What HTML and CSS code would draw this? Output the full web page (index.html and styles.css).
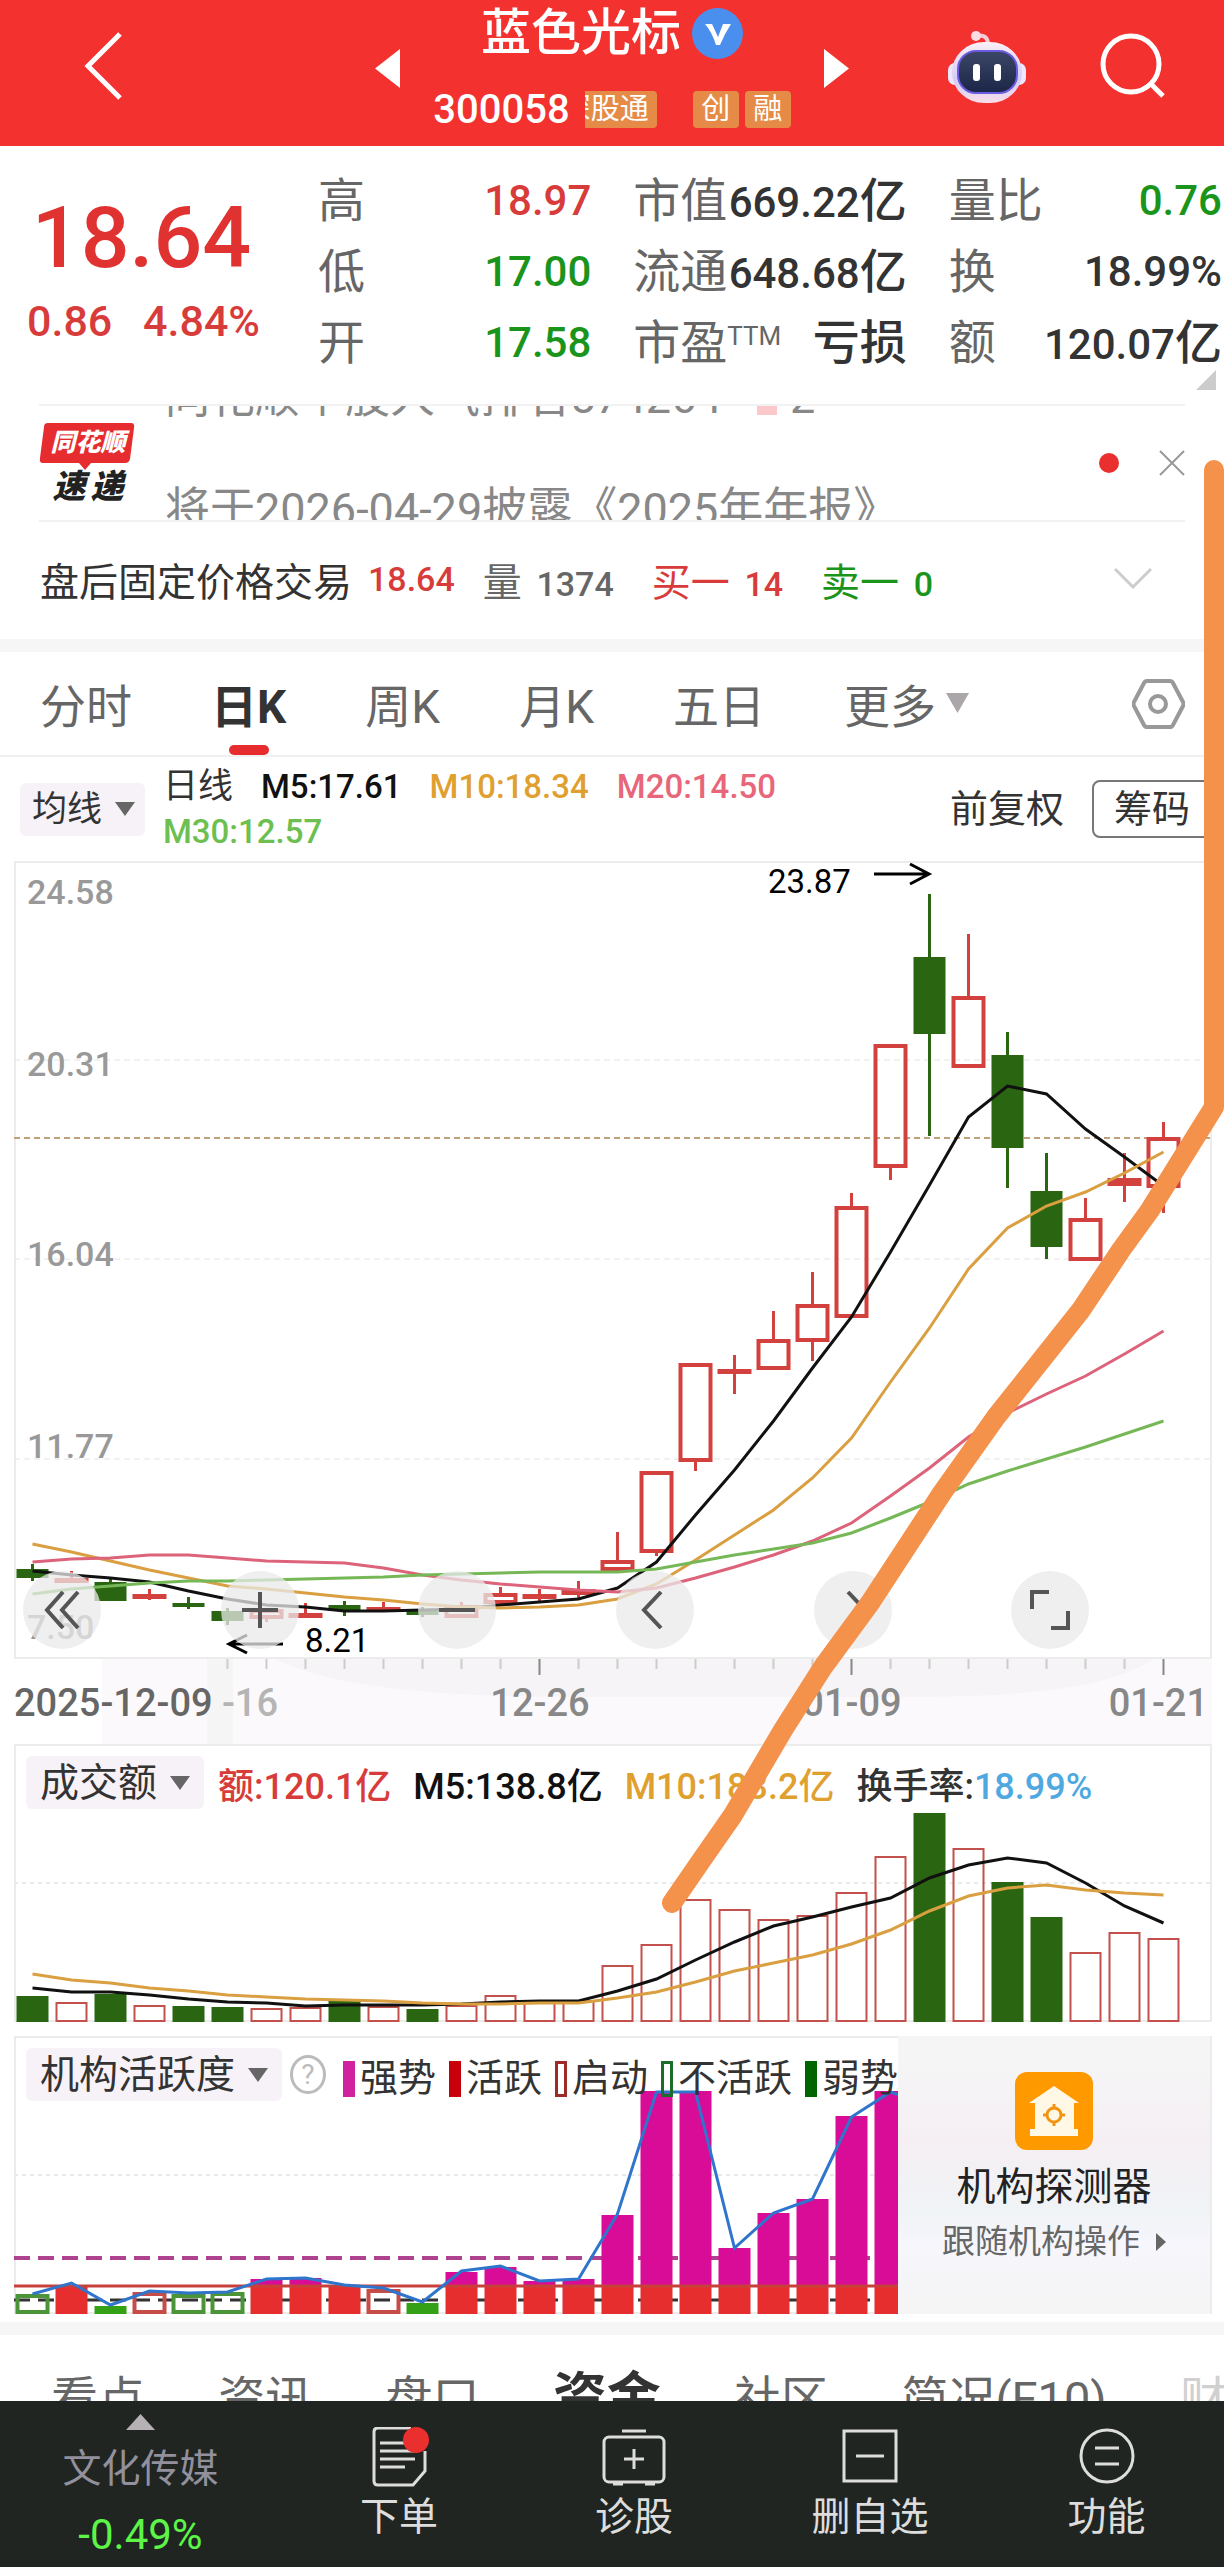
FILE: index.html
```html
<!DOCTYPE html>
<html lang="zh-CN">
<head>
    <meta charset="UTF-8">
    <meta name="viewport" content="width=device-width, initial-scale=1">
    <title>蓝色光标 300058</title>
    <link rel="stylesheet" href="styles.css">
</head>
<body>
    <header class="topbar">
        <a class="back" href="#" aria-label="返回">
            <svg width="40" height="68" viewBox="0 0 40 68"><path d="M37 2 L5 34 L37 66" fill="none" stroke="#fff" stroke-width="5"/></svg>
        </a>
        <div class="switcher">
            <button type="button" aria-label="上一只"><svg width="25" height="39" viewBox="0 0 25 39"><path d="M25 0 V39 L0 19.5Z" fill="#fff"/></svg></button>
            <div class="stock">
                <h1>蓝色光标
                    <svg width="51" height="51" viewBox="0 0 51 51"><circle cx="25.500" cy="25.500" r="25.500" fill="#4a8fee"/><path d="M13 16 H20 L26 29 L31 16 H39 Q33 25 28 37 H24 Q20 24 13 16Z" fill="#fff"/></svg>
                </h1>
                <p class="code">300058
                    <span class="tag tag-cut"><span>深股通</span></span>
                    <span class="tag">创</span>
                    <span class="tag">融</span>
                </p>
            </div>
            <button type="button" aria-label="下一只"><svg width="25" height="39" viewBox="0 0 25 39"><path d="M0 0 V39 L25 19.5Z" fill="#fff"/></svg></button>
        </div>
        <div class="tools">
            <button type="button" aria-label="智能助手">
                <svg width="78" height="74" viewBox="0 0 78 74">
                    <defs>
                        <linearGradient id="shell" x1="0" y1="0" x2="0" y2="1"><stop offset="0" stop-color="#fbeef6"/><stop offset=".6" stop-color="#d3cdf6"/><stop offset="1" stop-color="#f9dde8"/></linearGradient>
                        <linearGradient id="visor" x1="0" y1="0" x2="0" y2="1"><stop offset="0" stop-color="#3c4768"/><stop offset="1" stop-color="#1a2547"/></linearGradient>
                    </defs>
                    <path d="M27 7 Q40 4 40 16" fill="none" stroke="#f7ccd8" stroke-width="4"/>
                    <circle cx="28" cy="7" r="5" fill="#f9dbe4"/>
                    <rect x="0" y="34" width="78" height="22" rx="7" fill="#eee6fa"/>
                    <rect x="4" y="13" width="70" height="61" rx="32" fill="url(#shell)"/>
                    <rect x="10" y="22" width="59" height="42" rx="18" fill="url(#visor)" stroke="#6a5be0" stroke-width="2"/>
                    <rect x="25" y="35" width="7" height="17" rx="3" fill="#fff"/>
                    <rect x="46" y="35" width="7" height="17" rx="3" fill="#fff"/>
                </svg>
            </button>
            <button type="button" aria-label="搜索">
                <svg width="65" height="66" viewBox="0 0 65 66"><circle cx="31" cy="31" r="28" fill="none" stroke="#fff" stroke-width="5"/><path d="M51 51 L63 63" stroke="#fff" stroke-width="5"/></svg>
            </button>
        </div>
    </header>

    <section class="quote">
        <div class="last">
            <strong>18.64</strong>
            <p><span>0.86</span><span>4.84%</span></p>
        </div>
        <dl>
            <div><dt>高</dt><dd class="up">18.97</dd></div>
            <div><dt>低</dt><dd class="down">17.00</dd></div>
            <div><dt>开</dt><dd class="down">17.58</dd></div>
        </dl>
        <dl>
            <div><dt>市值</dt><dd>669.22<span>亿</span></dd></div>
            <div><dt>流通</dt><dd>648.68<span>亿</span></dd></div>
            <div><dt>市盈<sup>TTM</sup></dt><dd><span>亏损</span></dd></div>
        </dl>
        <dl>
            <div><dt>量比</dt><dd class="down">0.76</dd></div>
            <div><dt>换</dt><dd>18.99%</dd></div>
            <div><dt>额</dt><dd>120.07<span>亿</span></dd></div>
        </dl>
        <svg class="corner" width="20" height="20" viewBox="0 0 20 20"><path d="M20 0 V20 H0Z" fill="#ccc"/></svg>
    </section>

    <section class="news">
        <div class="news-logo">
            <svg width="96" height="48" viewBox="0 0 96 48"><path d="M9 0 H92 Q96 0 95 5 L91 36 Q90 40 86 40 H52 L46 47 L40 40 H4 Q0 40 1 35 L5 4 Q5 0 9 0Z" fill="#e62c2e"/></svg>
            <b>同花顺</b>
            <em>速<span>递</span></em>
        </div>
        <div class="ticker">
            <p>同花顺个股人气排名574264 <i></i> 2</p>
            <p>将于2026-04-29披露《2025年年报》</p>
        </div>
        <span class="dot"></span>
        <button type="button" aria-label="关闭"><svg width="26" height="26" viewBox="0 0 26 26"><path d="M1 1 L25 25 M25 1 L1 25" stroke="#999" stroke-width="2"/></svg></button>
    </section>

    <section class="after">
        <span>盘后固定价格交易</span>
        <b class="up">18.64</b>
        <span class="grey">量 <b>1374</b></span>
        <span class="up">买一 <b>14</b></span>
        <span class="down">卖一 <b>0</b></span>
        <button type="button" aria-label="展开"><svg width="38" height="24" viewBox="0 0 38 24"><path d="M1 2 L19 20 L37 2" fill="none" stroke="#ccc" stroke-width="3"/></svg></button>
    </section>

    <nav class="periods">
        <a href="#">分时</a>
        <a href="#" class="active">日K</a>
        <a href="#">周K</a>
        <a href="#">月K</a>
        <a href="#">五日</a>
        <a href="#">更多<svg width="23" height="20" viewBox="0 0 23 20"><path d="M0 0 H23 L11.5 20Z" fill="#aaa6aa"/></svg></a>
        <button type="button" aria-label="设置"><svg width="53" height="50" viewBox="0 0 53 50"><path d="M15 2 H38 Q40 2 41 4 L51 23 Q52 25 51 27 L41 46 Q40 48 38 48 H15 Q13 48 12 46 L2 27 Q1 25 2 23 L12 4 Q13 2 15 2Z" fill="none" stroke="#999" stroke-width="4"/><circle cx="26" cy="25" r="8" fill="none" stroke="#999" stroke-width="4"/></svg></button>
    </nav>

    <section class="averages">
        <label class="picker"><select aria-label="主图指标"><option>均线</option></select></label>
        <p>
            <span>日线</span>
            <b>M5:17.61</b>
            <b class="m10">M10:18.34</b>
            <b class="m20">M20:14.50</b>
            <b class="m30">M30:12.57</b>
        </p>
        <button type="button" class="adjust">前复权</button>
        <button type="button" class="chips">筹码</button>
    </section>

    <main class="charts">
        <section class="kline">
            <svg id="kline" viewBox="0 0 1198 883"></svg>
            <div class="controls">
                <button type="button" aria-label="最早"><svg width="36" height="38" viewBox="0 0 36 38"><path d="M19 1 L3 19 L19 37 M34 1 L18 19 L34 37"/></svg></button>
                <button type="button" aria-label="放大"><svg width="36" height="38" viewBox="0 0 36 38"><path d="M0 19 H36 M18 1 V37"/></svg></button>
                <button type="button" aria-label="缩小"><svg width="36" height="38" viewBox="0 0 36 38"><path d="M0 19 H36"/></svg></button>
                <button type="button" aria-label="向左"><svg width="36" height="38" viewBox="0 0 36 38"><path d="M24 1 L7 19 L24 37"/></svg></button>
                <button type="button" aria-label="向右"><svg width="36" height="38" viewBox="0 0 36 38"><path d="M13 1 L30 19 L13 37"/></svg></button>
                <button type="button" aria-label="全屏"><svg width="40" height="40" viewBox="0 0 40 40"><path d="M19 2 H2 V19 M38 21 V38 H21"/></svg></button>
            </div>
        </section>

        <section class="panel">
            <svg id="turnover" viewBox="0 0 1198 278"></svg>
            <div class="panel-head">
                <label class="picker"><select aria-label="副图指标"><option>成交额</option></select></label>
                <span class="up">额:120.1亿</span>
                <span class="black">M5:138.8亿</span>
                <span class="m10">M10:183.2亿</span>
                <span>换手率:<span class="blue">18.99%</span></span>
            </div>
        </section>

        <section class="panel activity">
            <svg id="activity" viewBox="0 0 884 278"></svg>
            <div class="panel-head legend">
                <label class="picker"><select aria-label="副图指标二"><option>机构活跃度</option></select></label>
                <button type="button" class="help" aria-label="说明">?</button>
                <span><i class="strong"></i>强势</span>
                <span><i class="lively"></i>活跃</span>
                <span><i class="start"></i>启动</span>
                <span><i class="quiet"></i>不活跃</span>
                <span><i class="weak"></i>弱势</span>
            </div>
            <a class="promo" href="#">
                <svg width="78" height="78" viewBox="0 0 78 78">
                    <rect width="78" height="78" rx="12" fill="#ff9900"/>
                    <path d="M39 14 L64 31 H59 V57 H63 V64 H15 V57 H20 V31 H14Z" fill="#fff8e6"/>
                    <circle cx="39" cy="43" r="7" fill="none" stroke="#f19412" stroke-width="3"/>
                    <path d="M39 32 V37 M39 49 V54 M28 43 H33 M45 43 H50" stroke="#f19412" stroke-width="3"/>
                </svg>
                <strong>机构探测器</strong>
                <span>跟随机构操作<svg width="10" height="18" viewBox="0 0 10 18"><path d="M0 0 L10 9 L0 18Z" fill="#666"/></svg></span>
            </a>
        </section>
    </main>

    <nav class="sections">
        <a href="#">看点</a>
        <a href="#">资讯</a>
        <a href="#">盘口</a>
        <a href="#" class="active">资金</a>
        <a href="#">社区</a>
        <a href="#">简况(F10)</a>
        <a href="#" class="fade">财务</a>
    </nav>

    <nav class="bottom">
        <a href="#" class="sector">
            <svg width="29" height="16" viewBox="0 0 29 16"><path d="M14.5 0 L29 16 H0Z" fill="#b5b1b5"/></svg>
            <span>文化传媒</span>
            <b>-0.49%</b>
        </a>
        <a href="#">
            <svg width="68" height="60" viewBox="0 0 68 60"><g fill="none" stroke="#ddd" stroke-width="3"><path d="M60 24 V44 L48 58 H13 Q9 58 9 54 V5 Q9 1 13 1 H46"/><path d="M15 16 H42 M15 24 H50 M15 32 H50 M15 40 H40"/></g><circle cx="51" cy="13" r="13" fill="#ea2f2f"/></svg>
            <span>下单</span>
        </a>
        <a href="#">
            <svg width="68" height="60" viewBox="0 0 68 60"><g fill="none" stroke="#ddd" stroke-width="3"><path d="M22 4 H46"/><rect x="4" y="10" width="60" height="45" rx="5"/><path d="M24 32 H44 M34 22 V42 M13 57 H23 M45 57 H55"/></g></svg>
            <span>诊股</span>
        </a>
        <a href="#">
            <svg width="68" height="60" viewBox="0 0 68 60"><path d="M8 4 H60 V54 H8Z M20 29 H48" fill="none" stroke="#ddd" stroke-width="3"/></svg>
            <span>删自选</span>
        </a>
        <a href="#">
            <svg width="68" height="60" viewBox="0 0 68 60"><g fill="none" stroke="#ddd" stroke-width="3"><circle cx="34" cy="29" r="26"/><path d="M22 21 H46 M22 37 H46"/></g></svg>
            <span>功能</span>
        </a>
    </nav>

    <svg class="marker" viewBox="0 0 1224 2567"><path d="M1214 470 V1107 L1150 1210 L1121 1250 L1081 1310 L996 1417 L942 1493 L870 1603 L823 1667 L783 1730 L733 1815 L703 1858 L672 1903"/></svg>

    <script src="script.js"></script>
</body>
</html>
```

FILE: styles.css
```css
* {
    box-sizing: border-box;
}

body {
    position: relative;
    margin: 0;
    background: #fff;
    color: #333;
    font-family: Roboto, "Noto Sans CJK SC", sans-serif;
    font-size: 39px;
    overflow-x: hidden;
}

h1, p, dl, dd {
    margin: 0;
}

a {
    color: inherit;
    text-decoration: none;
}

button {
    padding: 0;
    border: none;
    background: none;
    color: inherit;
    font: inherit;
    cursor: pointer;
}

svg {
    display: block;
    flex-shrink: 0;
}

b {
    font-weight: 500;
}

.up { color: #d83c3a; }
.down { color: #1a941a; }
.grey { color: #666; }
.black { color: #111; }
.blue { color: #4fa9e0; }
.m10 { color: #e0a030; }
.m20 { color: #e8667a; }
.m30 { color: #6cbf50; }

/* Header */
.topbar {
    display: grid;
    grid-template-columns: 1fr auto 1fr;
    align-items: center;
    height: 146px;
    padding: 0 59px 0 83px;
    background: #f3312f;
    color: #fff;
}

.back {
    margin-top: -14px;
}

.switcher {
    display: flex;
    align-items: center;
    gap: 33px;
    margin-left: -24px;
    margin-top: -10px;
}

.stock h1 {
    display: flex;
    justify-content: center;
    align-items: center;
    gap: 11px;
    height: 50px;
    font-size: 50px;
    font-weight: 500;
    line-height: 50px;
}

.code {
    display: flex;
    align-items: center;
    gap: 6px;
    height: 38px;
    margin-top: 32px;
    font-size: 40px;
    font-weight: 500;
}

.tag {
    width: 46px;
    height: 37px;
    border-radius: 4px;
    background: #e58b47;
    font-size: 29px;
    font-weight: 400;
    line-height: 37px;
    text-align: center;
    white-space: nowrap;
}

.tag-cut {
    display: flex;
    justify-content: flex-end;
    width: 72px;
    margin-left: 9px;
    margin-right: 30px;
    padding-right: 8px;
    border-radius: 0 4px 4px 0;
    overflow: hidden;
}

.tag-cut span {
    flex-shrink: 0;
}

.tools {
    display: flex;
    justify-content: flex-end;
    align-items: center;
    gap: 74px;
    margin-top: -14px;
}

/* Quote */
.quote {
    position: relative;
    display: grid;
    grid-template-columns: 249px 1fr 1fr 1fr;
    gap: 42px;
    height: 258px;
    padding: 19px 2px 0 27px;
}

.last {
    color: #e03331;
    text-align: center;
    padding-top: 24px;
}

.last strong {
    display: block;
    font-size: 86px;
    font-weight: 500;
    line-height: 98px;
    margin-right: 20px;
}

.last p {
    display: flex;
    justify-content: space-between;
    font-size: 43px;
    font-weight: 500;
    line-height: 68px;
    padding-right: 16px;
    color: #d83c3a;
}

.quote dl div {
    display: flex;
    justify-content: space-between;
    height: 71px;
    line-height: 71px;
    white-space: nowrap;
}

.quote dt {
    color: #666;
    font-size: 47px;
}

.quote dt sup {
    font-size: 26px;
    line-height: 1;
    vertical-align: 14px;
}

.quote dd {
    font-size: 42px;
    font-weight: 500;
}

.quote dd span {
    font-size: 47px;
}

.corner {
    position: absolute;
    right: 8px;
    bottom: 14px;
}

/* News ticker */
.news {
    display: flex;
    align-items: center;
    height: 118px;
    margin: 0 39px;
    border-top: 2px solid #f2f2f2;
    border-bottom: 2px solid #f2f2f2;
}

.news-logo {
    display: grid;
    grid-template-rows: 40px 40px;
    width: 98px;
    height: 80px;
    margin-right: 28px;
    font-style: italic;
    line-height: 40px;
    text-align: center;
}

.news-logo svg,
.news-logo b {
    grid-area: 1 / 1;
}

.news-logo b {
    color: #fff;
    font-size: 25px;
    font-weight: 900;
}

.news-logo em {
    display: flex;
    justify-content: center;
    gap: 5px;
    padding-top: 4px;
    color: #222;
    font-size: 33px;
    font-weight: 900;
}

.ticker {
    flex: 1;
    align-self: stretch;
    overflow: hidden;
}

.ticker p {
    color: #888;
    font-size: 45px;
    line-height: 112px;
    white-space: nowrap;
}

.ticker p:first-child {
    margin-top: -64px;
}

.ticker i {
    display: inline-block;
    width: 20px;
    height: 30px;
    margin: 0 2px 0 24px;
    background: #fbc9cb;
    vertical-align: -2px;
}

.dot {
    width: 20px;
    height: 20px;
    margin-right: 40px;
    border-radius: 50%;
    background: #ea2f2f;
}

/* After-hours trading */
.after {
    display: flex;
    align-items: center;
    height: 117px;
    padding: 0 72px 4px 40px;
    white-space: nowrap;
}

.after b {
    font-size: 34px;
    margin-left: 5px;
}

.after > b {
    margin: 0 28px 0 16px;
}

.after span + span {
    margin-left: 38px;
}

.after button {
    margin-left: auto;
}

/* Period tabs */
.periods {
    display: flex;
    align-items: center;
    gap: 79px;
    height: 118px;
    padding: 0 39px 0 40px;
    border-top: 13px solid #f6f6f6;
    border-bottom: 2px solid #f0f0f0;
    color: #666;
    font-size: 46px;
    white-space: nowrap;
}

.periods a {
    display: flex;
    align-items: center;
    gap: 10px;
    height: 100%;
    border-top: 8px solid transparent;
    border-bottom: 10px solid transparent;
}

.periods .active {
    position: relative;
    color: #333;
    font-weight: 700;
}

.periods .active::after {
    content: "";
    position: absolute;
    left: 50%;
    bottom: -10px;
    width: 40px;
    height: 10px;
    margin-left: -20px;
    border-radius: 5px;
    background: #e62c2e;
}

.periods button {
    margin-left: auto;
}

/* Pickers */
.picker {
    display: flex;
    align-items: center;
    gap: 12px;
    height: 53px;
    padding: 0 14px;
    border-radius: 6px;
    background: #f7f2f7;
}

.picker select {
    padding: 0;
    border: none;
    background: none;
    appearance: none;
    color: #333;
    font: inherit;
}

.picker::after {
    content: "";
    border: 10px solid transparent;
    border-top: 14px solid #666;
    border-bottom: none;
}

/* Moving averages */
.averages {
    display: flex;
    align-items: center;
    height: 104px;
    padding: 0 12px 0 20px;
    font-size: 35px;
    white-space: nowrap;
}

.averages p {
    display: flex;
    flex: 1;
    flex-wrap: wrap;
    column-gap: 28px;
    margin-left: 18px;
    line-height: 45px;
}

.averages p b {
    font-size: 33px;
}

.averages b:nth-child(2) {
    color: #111;
}

.averages .picker {
    padding: 0 10px 0 12px;
}

.adjust {
    margin-left: 16px;
    padding-bottom: 8px;
    font-size: 38px;
}

.chips {
    width: 120px;
    height: 58px;
    margin-left: 28px;
    border: 2px solid #777;
    border-radius: 8px;
    font-size: 38px;
    line-height: 48px;
}

/* Charts */
.charts {
    padding: 0 12px 8px 14px;
    border-bottom: 13px solid #f6f6f6;
}

.charts section > svg {
    width: 100%;
    height: auto;
}

.kline {
    position: relative;
}

.kline text {
    font-size: 34px;
    font-weight: 500;
    fill: #999;
}

.kline .date {
    font-size: 38px;
    fill: #888;
}

.kline .mark {
    font-size: 33px;
    font-weight: 400;
    fill: #000;
}

.controls {
    position: absolute;
    left: 1%;
    right: 10%;
    top: 80%;
    display: flex;
    justify-content: space-between;
    margin: 4px 3px 0 -3px;
}

.controls button {
    display: flex;
    justify-content: center;
    align-items: center;
    width: 78px;
    height: 78px;
    border-radius: 50%;
    background: rgba(234, 234, 234, 0.75);
}

.controls path {
    fill: none;
    stroke: #555;
    stroke-width: 4;
}

.panel {
    display: grid;
    grid-template-columns: 1fr;
}

.panel > svg,
.panel-head {
    grid-area: 1 / 1;
}

.panel-head {
    display: flex;
    align-items: center;
    align-self: start;
    gap: 22px;
    margin: 12px 0 0 12px;
    height: 53px;
    font-size: 36px;
    font-weight: 500;
    white-space: nowrap;
}

.panel-head .picker {
    font-size: 39px;
    font-weight: 400;
}

.panel-head .picker + span {
    margin-left: -8px;
}

.activity {
    grid-template-columns: 884fr 314fr;
    margin-top: 14px;
}

.legend {
    gap: 13px;
    min-width: 0;
    font-size: 38px;
    font-weight: 400;
}

.legend span {
    display: flex;
    align-items: center;
    gap: 5px;
}

.legend i {
    width: 12px;
    height: 36px;
    margin-top: 8px;
}

.strong { background: #d0219f; }
.lively { background: #c8000c; }
.start { border: 3px solid #9c2c28; }
.quiet { border: 3px solid #1b6d2c; }
.weak { background: #006400; }

.help {
    width: 39px;
    height: 39px;
    margin: 0 4px 0 -5px;
    border: 3px solid #bbb;
    border-radius: 50%;
    color: #bbb;
    font-size: 28px;
    line-height: 32px;
}

.promo {
    display: flex;
    flex-direction: column;
    align-items: center;
    padding-top: 36px;
    background: linear-gradient(#f5f5f6 10%, #f5eff3 38%, #f0f3f6 62%, #f6f6fc 75%, #f5f5f5);
    border-right: 2px solid #ececec;
    color: #222;
    white-space: nowrap;
}

.promo strong {
    margin-top: 10px;
    font-weight: 400;
    line-height: 54px;
}

.promo span {
    display: flex;
    align-items: center;
    gap: 16px;
    color: #666;
    font-size: 33px;
    line-height: 56px;
}

/* Lower tabs, cut off by the bottom bar */
.sections {
    display: flex;
    justify-content: space-between;
    height: 66px;
    padding: 29px 0 0 51px;
    color: #666;
    font-size: 47px;
    line-height: 70px;
    white-space: nowrap;
    overflow: hidden;
}

.sections .active {
    color: #333;
    font-size: 54px;
    font-weight: 700;
}

.sections .fade {
    width: 44px;
    opacity: 0.3;
}

/* Bottom bar */
.bottom {
    display: grid;
    grid-template-columns: 281fr 236fr 234fr 238fr 235fr;
    height: 166px;
    background: #202521;
    color: #ddd;
}

.bottom a {
    display: flex;
    flex-direction: column;
    align-items: center;
    padding-top: 26px;
    line-height: 60px;
}

.bottom .sector {
    padding-top: 13px;
    color: #92909c;
    line-height: 65px;
}

.sector span {
    margin-top: 7px;
}

.sector b {
    color: #5cf548;
    font-size: 42px;
    font-weight: 400;
}

/* Hand-drawn line over the page */
.marker {
    position: absolute;
    top: 0;
    left: 0;
    width: 100%;
    height: auto;
    pointer-events: none;
}

.marker path {
    fill: none;
    stroke: #f4914b;
    stroke-width: 20;
    stroke-linecap: round;
    stroke-linejoin: round;
}
```

FILE: script.js
```js
const STEP = 39;
const FIRST = 18.5;
const RED = '#d2413e';
const GREEN = '#2a6611';

const x = i => FIRST + STEP * i;

function line(points, color, width = 3) {
    const d = points.map((y, i) => `${x(i)},${y}`).join(' ');
    return `<polyline points="${d}" fill="none" stroke="${color}" stroke-width="${width}"/>`;
}

function hline(y, width, color, dash = '', stroke = 2) {
    return `<path d="M0 ${y} H${width}" stroke="${color}" stroke-width="${stroke}" stroke-dasharray="${dash}"/>`;
}

function box(i, top, bottom, color, filled, stroke = 4) {
    if (filled) {
        return `<rect x="${x(i) - 16}" y="${top}" width="32" height="${bottom - top}" fill="${color}"/>`;
    }
    const h = Math.max(bottom - top - stroke, 1);
    return `<rect x="${x(i) - 15}" y="${top + stroke / 2}" width="30" height="${h}" fill="none" stroke="${color}" stroke-width="${stroke}"/>`;
}

// Candles: [body top, body bottom, high, low, falling]
const candles = [
    [708, 717, 703, 720, 1], [717, 722, 710, 722, 0], [721, 740, 717, 740, 1], [733, 737, 728, 739, 0],
    [742, 746, 736, 748, 1], [750, 760, 747, 764, 1], [748, 758, 748, 761, 0], [752, 756, 742, 756, 0],
    [744, 749, 740, 755, 1], [746, 749, 741, 751, 0], [750, 754, 746, 756, 1], [744, 757, 741, 757, 0],
    [732, 743, 726, 743, 0], [733, 738, 728, 740, 0], [728, 734, 720, 737, 0], [699, 710, 671, 710, 0],
    [610, 692, 610, 695, 0], [502, 601, 502, 610, 0], [508, 513, 494, 533, 0], [478, 509, 450, 509, 0],
    [443, 481, 411, 500, 0], [345, 457, 332, 457, 0], [183, 307, 183, 319, 0], [96, 173, 33, 275, 1],
    [135, 207, 73, 207, 0], [194, 287, 171, 327, 1], [330, 386, 292, 398, 1], [357, 400, 337, 400, 0],
    [317, 325, 292, 341, 0], [276, 327, 261, 352, 0]
];
const ma5 = [710, 714, 717, 721, 730, 738, 744, 746, 750, 750, 749, 748, 744, 741, 738, 727, 701, 654, 609, 560, 507, 456, 394, 326, 256, 225, 233, 268, 296, 325];
const ma10 = [683, 691, 700, 709, 717, 725, 728, 732, 736, 739, 743, 746, 747, 746, 744, 738, 723, 699, 674, 649, 617, 577, 521, 467, 408, 367, 345, 331, 312, 291];
const ma20 = [701, 698, 697, 694, 694, 697, 700, 701, 702, 707, 714, 719, 723, 726, 729, 731, 727, 717, 706, 694, 680, 662, 635, 607, 576, 552, 533, 515, 493, 470];
const ma30 = [733, 728, 725, 722, 720, 720, 719, 718, 717, 716, 714, 713, 712, 711, 711, 711, 708, 701, 694, 688, 682, 672, 657, 641, 623, 610, 598, 586, 573, 560];

// The MA5 line passes the middle days in one straight run
ma5[22] = 391;
ma5[23] = 324;

function drawKline() {
    let s = '<rect x="88" y="797" width="1124" height="86" fill="#fcf9fd"/>';
    s += '<path d="M200 797 H1140 Q1090 836 900 836 H560 Q330 836 260 797Z" fill="#f6f4f6"/>';
    s += '<rect x="193" y="797" width="26" height="86" fill="#f5f5f5"/>';
    s += '<rect x="1" y="1" width="1196" height="796" fill="none" stroke="#ececec" stroke-width="2"/>';
    [199, 398, 598].forEach(y => s += hline(y, 1198, '#e4e4e4', '6 4', 1));
    s += hline(277, 1198, '#bda27c', '6 4');
    [['24.58', 43], ['20.31', 215], ['16.04', 405], ['11.77', 597], ['7.50', 778]].forEach(([t, y]) => {
        s += `<text x="13" y="${y}">${t}</text>`;
    });

    // Date axis
    for (let i = 5; i < 30; i++) {
        const major = i === 13 || i === 21 || i === 29;
        s += `<path d="M${x(i)} 798 v${major ? 16 : 10}" stroke="${major ? '#888' : '#ccc'}" stroke-width="2"/>`;
    }
    s += '<text class="date" x="264" y="855" text-anchor="end" opacity="0.6">-16</text>';
    s += '<text class="date" x="0" y="855" style="fill:#666">2025-12-09</text>';
    s += '<text class="date" x="526" y="855" text-anchor="middle">12-26</text>';
    s += '<text class="date" x="838" y="855" text-anchor="middle">01-09</text>';
    s += '<text class="date" x="1194" y="855" text-anchor="end">01-21</text>';

    candles.forEach(([top, bottom, high, low, falling], i) => {
        const color = falling ? GREEN : RED;
        s += `<path d="M${x(i)} ${high} V${top} M${x(i)} ${bottom} V${low}" stroke="${color}" stroke-width="3"/>`;
        s += box(i, top, bottom, color, falling);
    });
    s += line(ma5, '#111') + line(ma10, '#d99f40') + line(ma20, '#dc6379') + line(ma30, '#76b857');

    // High and low marks
    s += '<text class="mark" x="754" y="32">23.87</text>';
    s += '<path d="M860 13 H914 M896 3 L915 13 L896 23" fill="none" stroke="#000" stroke-width="3"/>';
    s += '<text class="mark" x="291" y="791">8.21</text>';
    s += '<path d="M269 783 H216 M233 774 L215 783 L233 792" fill="none" stroke="#000" stroke-width="3"/>';
    document.getElementById('kline').innerHTML = s;
}

// Turnover: bar heights, falling days drawn solid
const turnover = [26, 20, 28, 17, 16, 15, 14, 15, 21, 16, 13, 17, 27, 22, 22, 57, 78, 123, 113, 103, 107, 130, 166, 209, 174, 140, 105, 70, 90, 84];
const turnoverDown = [0, 2, 4, 5, 8, 10, 23, 25, 26];
const vol5 = [244, 248, 248, 251, 255, 258, 259, 262, 261, 261, 261, 260, 258, 257, 257, 247, 235, 216, 198, 182, 173, 163, 154, 134, 121, 114, 119, 139, 162, 179];
const vol10 = [230, 236, 239, 244, 247, 251, 253, 255, 256, 257, 259, 260, 260, 259, 259, 254, 248, 238, 227, 219, 211, 200, 186, 167, 152, 144, 141, 146, 149, 151];

function drawTurnover() {
    let s = '<rect x="1" y="1" width="1196" height="276" fill="none" stroke="#ececec" stroke-width="2"/>';
    s += hline(139, 1198, '#e9e9e9', '4 4');
    turnover.forEach((h, i) => {
        const falling = turnoverDown.includes(i);
        s += box(i, 278 - h, 278, falling ? GREEN : '#c2504d', falling, 2);
    });
    s += line(vol5, '#111') + line(vol10, '#d99f40');
    document.getElementById('turnover').innerHTML = s;
}

// Activity: [bar top, kind]
const activity = [
    [258, 'quiet'], [249, 'lively'], [270, 'weak'], [256, 'start'], [258, 'quiet'], [256, 'quiet'],
    [243, 'strong'], [242, 'strong'], [250, 'lively'], [253, 'start'], [267, 'weak'], [236, 'strong'],
    [231, 'strong'], [245, 'strong'], [243, 'strong'], [179, 'strong'], [55, 'strong'], [55, 'strong'],
    [212, 'strong'], [177, 'strong'], [163, 'strong'], [80, 'strong'], [55, 'strong']
];
const trend = [258, 247, 269, 255, 257, 256, 243, 242, 249, 252, 266, 235, 230, 245, 243, 178, 56, 56, 212, 177, 163, 81, 56, 70];

function drawActivity() {
    let s = '<path d="M884 1 H1 V277 H884" fill="none" stroke="#ececec" stroke-width="2"/>';
    s += hline(139, 884, '#e9e9e9', '4 4');
    s += hline(222, 884, '#b0418f', '16 8', 4);
    s += hline(264, 884, '#333', '16 8', 3);
    activity.forEach(([top, kind], i) => {
        if (kind === 'quiet') s += box(i, top, 278, '#4b9438', false, 4);
        if (kind === 'start') s += box(i, top, 278, '#c64c48', false, 4);
        if (kind === 'weak') s += box(i, top, 278, '#34a016', true);
        if (kind === 'lively') s += box(i, top, 278, '#e62e2e', true);
        if (kind === 'strong') {
            s += box(i, top, 250, '#d80c96', true);
            s += box(i, 250, 278, '#e62e2e', true);
        }
    });
    s += hline(250, 884, '#c8403c', '', 3);
    s += line(trend, '#2f75cc');
    document.getElementById('activity').innerHTML = s;
}

drawKline();
drawTurnover();
drawActivity();
```
